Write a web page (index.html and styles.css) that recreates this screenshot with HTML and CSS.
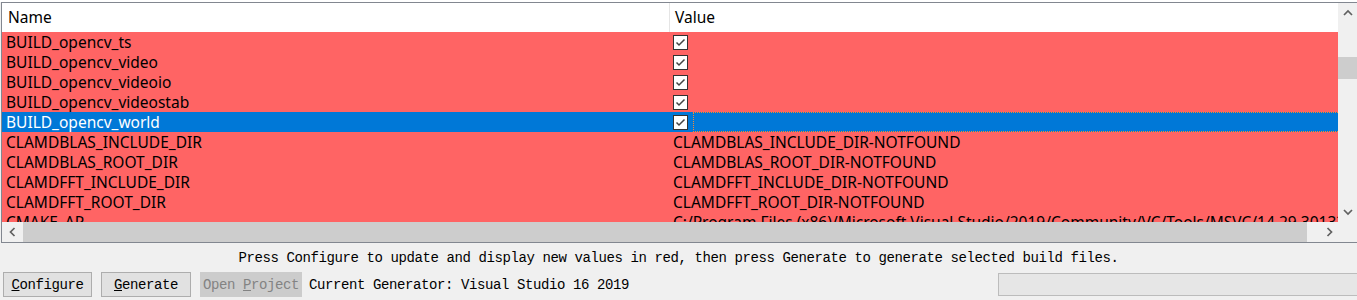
FILE: index.html
```html
<!DOCTYPE html>
<html lang="en">

<head>
  <meta charset="UTF-8">
  <meta name="viewport" content="width=device-width, initial-scale=1.0">
  <title>CMake</title>
  <link rel="stylesheet" href="styles.css">
</head>

<body>

  <div class="top-strip"></div>

  <!-- Cache entries -->
  <div class="cache-view">
    <div class="cache-header">
      <div class="head-name">Name</div>
      <div class="head-value">Value</div>
    </div>

    <div class="vscroll">
      <div class="arrow-btn vbtn">
        <svg width="10" height="7" viewBox="0 0 10 7"><polyline points="1,6 5,2 9,6" class="chev" /></svg>
      </div>
      <div class="vtrack"><div class="vthumb"></div></div>
      <div class="arrow-btn vbtn">
        <svg width="10" height="7" viewBox="0 0 10 7"><polyline points="1,1 5,5 9,1" class="chev" /></svg>
      </div>
    </div>

    <div class="cache-body">
      <div class="row">
        <div class="cell-name">BUILD_opencv_ts</div>
        <div class="cell-value"><svg class="check" width="15" height="15" viewBox="0 0 15 15"><rect x="0.5" y="0.5" width="14" height="14" /><polyline points="3.5,7.5 6,10 11.5,4.5" /></svg></div>
      </div>
      <div class="row">
        <div class="cell-name">BUILD_opencv_video</div>
        <div class="cell-value"><svg class="check" width="15" height="15" viewBox="0 0 15 15"><rect x="0.5" y="0.5" width="14" height="14" /><polyline points="3.5,7.5 6,10 11.5,4.5" /></svg></div>
      </div>
      <div class="row">
        <div class="cell-name">BUILD_opencv_videoio</div>
        <div class="cell-value"><svg class="check" width="15" height="15" viewBox="0 0 15 15"><rect x="0.5" y="0.5" width="14" height="14" /><polyline points="3.5,7.5 6,10 11.5,4.5" /></svg></div>
      </div>
      <div class="row">
        <div class="cell-name">BUILD_opencv_videostab</div>
        <div class="cell-value"><svg class="check" width="15" height="15" viewBox="0 0 15 15"><rect x="0.5" y="0.5" width="14" height="14" /><polyline points="3.5,7.5 6,10 11.5,4.5" /></svg></div>
      </div>
      <div class="row selected">
        <div class="cell-name">BUILD_opencv_world</div>
        <div class="cell-value"><svg class="check" width="15" height="15" viewBox="0 0 15 15"><rect x="0.5" y="0.5" width="14" height="14" /><polyline points="3.5,7.5 6,10 11.5,4.5" /></svg><span class="focus-rect"></span></div>
      </div>
      <div class="row">
        <div class="cell-name">CLAMDBLAS_INCLUDE_DIR</div>
        <div class="cell-value">CLAMDBLAS_INCLUDE_DIR-NOTFOUND</div>
      </div>
      <div class="row">
        <div class="cell-name">CLAMDBLAS_ROOT_DIR</div>
        <div class="cell-value">CLAMDBLAS_ROOT_DIR-NOTFOUND</div>
      </div>
      <div class="row">
        <div class="cell-name">CLAMDFFT_INCLUDE_DIR</div>
        <div class="cell-value">CLAMDFFT_INCLUDE_DIR-NOTFOUND</div>
      </div>
      <div class="row">
        <div class="cell-name">CLAMDFFT_ROOT_DIR</div>
        <div class="cell-value">CLAMDFFT_ROOT_DIR-NOTFOUND</div>
      </div>
      <div class="row">
        <div class="cell-name">CMAKE_AR</div>
        <div class="cell-value">C:/Program Files (x86)/Microsoft Visual Studio/2019/Community/VC/Tools/MSVC/14.29.30133/bin/Hostx64/x64/lib.exe</div>
      </div>
    </div>

    <div class="hscroll">
      <div class="arrow-btn hbtn-left">
        <svg width="7" height="10" viewBox="0 0 7 10"><polyline points="5.5,1 1.5,5 5.5,9" class="chev" /></svg>
      </div>
      <div class="htrack"><div class="hthumb"></div></div>
      <div class="arrow-btn hbtn-right">
        <svg width="7" height="10" viewBox="0 0 7 10"><polyline points="1.5,1 5.5,5 1.5,9" class="chev" /></svg>
      </div>
    </div>
    <div class="corner"></div>
  </div>

  <div class="status">Press Configure to update and display new values in red, then press Generate to generate selected build files.</div>

  <div class="actions">
    <button class="btn btn-configure"><u>C</u>onfigure</button>
    <button class="btn btn-generate"><u>G</u>enerate</button>
    <button class="btn btn-open" disabled>Open <u>P</u>roject</button>
    <span class="generator">Current Generator: Visual Studio 16 2019</span>
    <div class="progress"></div>
  </div>

</body>

</html>
```

FILE: styles.css
```css
/* Global */
html,
body {
  margin: 0;
  padding: 0;
  background-color: #f0f0f0;
  font-family: 'Noto Sans', sans-serif;
  font-size: 15.5px;
  color: #000;
  overflow: hidden;
}

.top-strip {
  height: 2px;
  background-color: #fff;
}

/* Cache view (tree) */
.cache-view {
  display: grid;
  grid-template-columns: 1336px 19px;
  grid-template-rows: 29px 190px 20px;
  margin-left: 1px;
  border: 1px solid #828790;
  border-right: none;
}

.cache-header {
  display: flex;
  background-color: #fff;
  line-height: 29px;
}

.head-name {
  width: 668px;
  box-sizing: border-box;
  padding-left: 6px;
  border-right: 1px solid #e5e5e5;
}

.head-value {
  padding-left: 5px;
}

.cache-body {
  grid-column: 1;
  grid-row: 2;
  overflow: hidden;
}

.row {
  display: flex;
  height: 20px;
  line-height: 20px;
  background-color: #ff6464;
  white-space: nowrap;
}

.row.selected {
  background-color: #0078d7;
  color: #fff;
}

.cell-name {
  width: 667px;
  flex-shrink: 0;
  box-sizing: border-box;
  padding-left: 4px;
  overflow: hidden;
}

.cell-value {
  display: flex;
  align-items: center;
  flex: 1;
  padding-left: 4px;
  overflow: hidden;
}

.check rect {
  fill: #fff;
  stroke: #333;
}

.check polyline {
  fill: none;
  stroke: #444;
  stroke-width: 1.5;
}

.focus-rect {
  flex: 1;
  align-self: stretch;
  margin-left: 5px;
  border: 1px dotted #ff8728;
  border-right: none;
}

/* Scrollbars */
.chev {
  fill: none;
  stroke: #606060;
  stroke-width: 1.7;
}

.arrow-btn {
  display: flex;
  align-items: center;
  justify-content: center;
  background-color: #f0f0f0;
}

.vscroll {
  grid-column: 2;
  grid-row: 1 / 3;
  display: flex;
  flex-direction: column;
  background-color: #f0f0f0;
}

.vbtn {
  height: 19px;
}

.vtrack {
  flex: 1;
}

.vthumb {
  margin-top: 35px;
  height: 22px;
  background-color: #cdcdcd;
}

.hscroll {
  grid-column: 1;
  grid-row: 3;
  display: flex;
  background-color: #f0f0f0;
}

.hbtn-left {
  width: 21px;
}

.hbtn-right {
  width: 17px;
}

.htrack {
  flex: 1;
  display: flex;
}

.hthumb {
  width: 1284px;
  background-color: #cdcdcd;
}

.corner {
  grid-column: 2;
  grid-row: 3;
  background-color: #f0f0f0;
}

/* Bottom area */
.status,
.actions {
  font-family: 'Liberation Mono', monospace;
  font-size: 14px;
  letter-spacing: -0.4px;
}

.status {
  margin-top: 3px;
  height: 24px;
  line-height: 24px;
  text-align: center;
  white-space: nowrap;
}

.actions {
  display: flex;
  align-items: center;
  margin-top: 2px;
  padding-left: 3px;
  white-space: nowrap;
}

.btn {
  height: 25px;
  padding: 0;
  margin-right: 9px;
  border: 1px solid #adadad;
  background-color: #e1e1e1;
  color: #000;
  font: inherit;
  letter-spacing: inherit;
}

.btn-configure {
  width: 89px;
}

.btn-generate {
  width: 90px;
}

.btn-open {
  width: 102px;
  margin-right: 7px;
  border-color: #cccccc;
  background-color: #cccccc;
  color: #838383;
}

.progress {
  width: 362px;
  height: 23px;
  margin-left: auto;
  margin-right: -3px;
  box-sizing: border-box;
  border: 1px solid #bcbcbc;
  background-color: #e6e6e6;
}
```
